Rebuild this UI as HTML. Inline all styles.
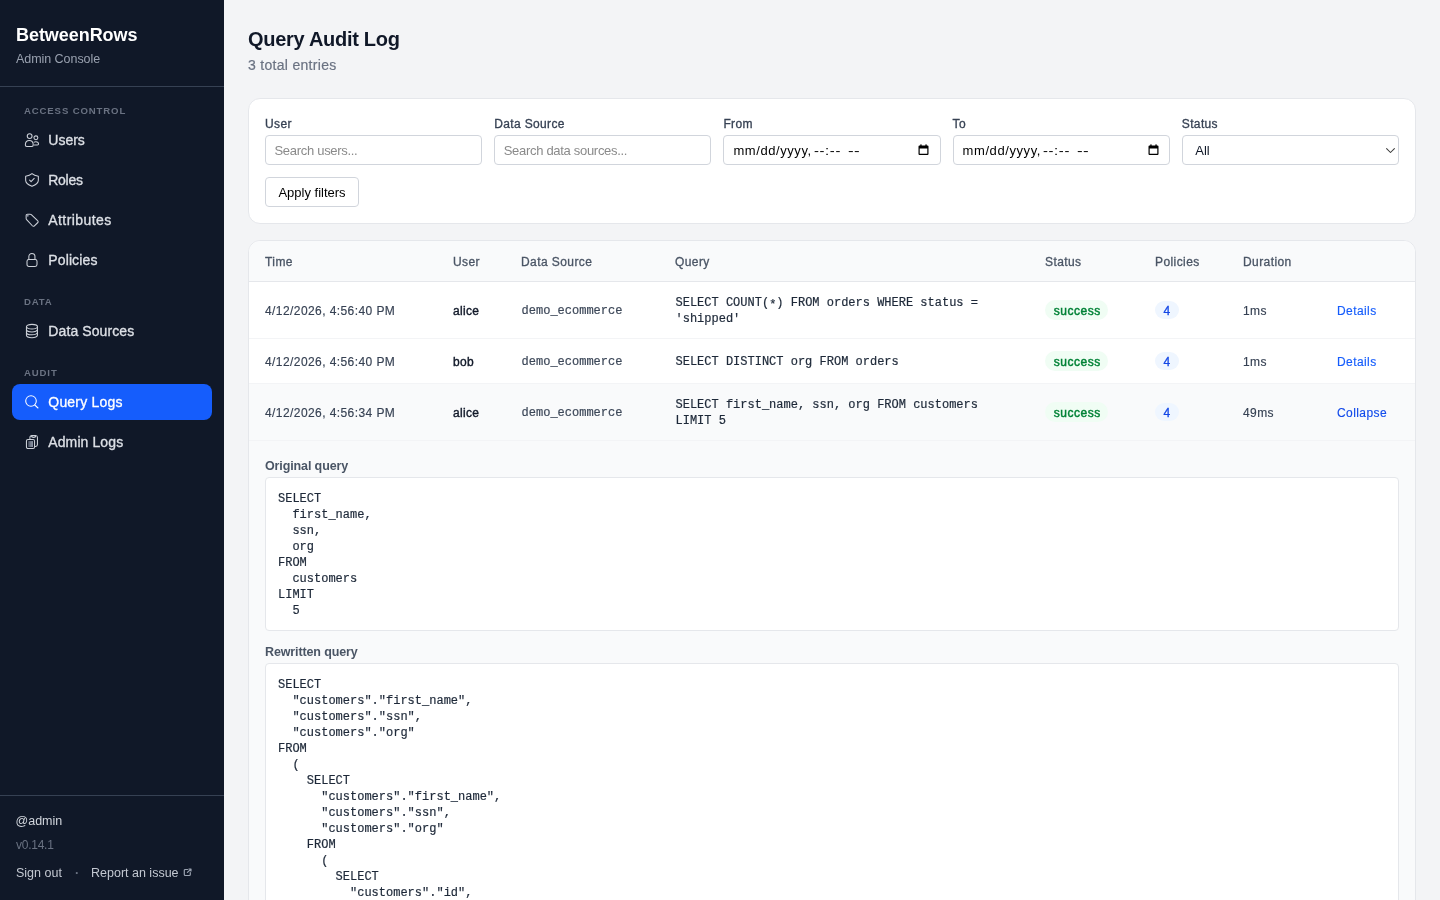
<!DOCTYPE html>
<html lang="en">
<head>
<meta charset="utf-8">
<title>BetweenRows Admin Console</title>
<style>
*{box-sizing:border-box;margin:0;padding:0}
html,body{width:1440px;height:900px;overflow:hidden}
body{font-family:"Liberation Sans",sans-serif;background:#f3f4f6;color:#101828;position:relative;will-change:transform}
.mono{font-family:"Liberation Mono",monospace}

/* ---------- sidebar ---------- */
#side{position:absolute;left:0;top:0;width:224px;height:900px;background:#101828;color:#fff}
#brand{position:absolute;left:16px;top:24px;font-size:18px;font-weight:700;line-height:22px;letter-spacing:-0.05px;color:#fff}
#sub{position:absolute;left:16px;top:51px;font-size:12.5px;line-height:16px;color:#99a1af;letter-spacing:-0.05px}
.hr{position:absolute;left:0;width:224px;height:1px;background:#364153}
.sec{position:absolute;left:24px;font-size:9.6px;font-weight:700;letter-spacing:0.86px;color:#6a7282;line-height:12px}
.nav{position:absolute;left:12px;width:200px;height:36px;border-radius:8px;color:#dde0e6;font-size:14px;line-height:36px;padding-left:36.3px;letter-spacing:0px;-webkit-text-stroke:0.3px currentColor}
.nav svg{position:absolute;left:12px;top:10px;width:16px;height:16px;fill:none;stroke:#cdd1d9;stroke-width:1.05;stroke-linecap:round;stroke-linejoin:round}
.nav.on{background:#155dfc;color:#fff}
.nav.on svg{stroke:#fff}
.foot{position:absolute;left:16px;font-size:12.5px;line-height:16px}

/* ---------- main ---------- */
h1{position:absolute;left:248px;top:26px;font-size:20px;line-height:26px;font-weight:700;color:#101828;letter-spacing:-0.29px}
#cnt{position:absolute;left:248px;top:55.5px;font-size:14px;line-height:18px;color:#6a7282;letter-spacing:0.3px;-webkit-text-stroke:0.2px #6a7282}
.card{position:absolute;left:248px;width:1168px;background:#fff;border:1px solid #e5e7eb;border-radius:12px}
#filters{top:98px;height:126px}
.lbl{position:absolute;top:18px;font-size:12px;line-height:14px;color:#364153;font-weight:400;letter-spacing:0.36px;-webkit-text-stroke:0.3px #364153}
.inp{position:absolute;top:36px;width:217.2px;height:30px;border:1px solid #d1d5dc;border-radius:4px;background:#fff;font-size:13px;line-height:30px;padding-left:8.5px;color:#8a8a8a;white-space:nowrap;letter-spacing:-0.3px}
.inp.dt{color:#000;letter-spacing:0.9px;padding-left:9px}
#apply{position:absolute;left:16px;top:78px;width:94px;height:30px;border:1px solid #d1d5dc;border-radius:4px;font-size:13px;line-height:30px;text-align:center;color:#000}

#tbl{top:240px;height:700px;overflow:hidden;border-bottom-left-radius:0;border-bottom-right-radius:0}
.row{position:absolute;left:0;width:1166px;border-bottom:1px solid #f3f4f6}
.c{position:absolute;font-size:12px;line-height:16px;color:#364153;white-space:nowrap;letter-spacing:0.42px;-webkit-text-stroke:0.15px #364153}
.th{font-size:12px;color:#4a5565;letter-spacing:0.42px;-webkit-text-stroke:0.3px #4a5565}
.q{font-family:"Liberation Mono",monospace;font-size:12px;line-height:16px;color:#1e2939;white-space:pre;letter-spacing:0;-webkit-text-stroke:0.2px #1e2939}
.ds{font-family:"Liberation Mono",monospace;font-size:12px;color:#3d4859;letter-spacing:0;-webkit-text-stroke:0.2px #3d4859}
.usr{color:#101828;letter-spacing:0.3px;-webkit-text-stroke:0.38px #101828}
.ok{position:absolute;left:796px;width:63px;height:20px;border-radius:10px;background:#f0fdf4;color:#008236;font-size:12px;font-weight:400;line-height:22px;text-align:center;letter-spacing:0.55px;-webkit-text-stroke:0.45px #008236;padding-left:1.5px}
.pol{position:absolute;left:906px;width:23.5px;height:18px;border-radius:9px;background:#eff6ff;color:#1447e6;font-size:12px;line-height:20px;text-align:center;-webkit-text-stroke:0.3px #1447e6}
.lnk{color:#155dfc;-webkit-text-stroke:0.15px #155dfc}
.sub{position:absolute;left:16px;font-size:12.5px;line-height:14px;font-weight:700;color:#4a5565;letter-spacing:-0.12px}
pre.box{position:absolute;left:16px;width:1134px;background:#fff;border:1px solid #e5e7eb;border-radius:4px;padding:13px 12px 11px;font-family:"Liberation Mono",monospace;font-size:12px;line-height:16px;color:#1e2939;-webkit-text-stroke:0.2px #1e2939}
</style>
</head>
<body>

<div id="side">
  <div id="brand">BetweenRows</div>
  <div id="sub">Admin Console</div>
  <div class="hr" style="top:86px"></div>

  <div class="sec" style="top:105px">ACCESS CONTROL</div>
  <div class="nav" style="top:122px"><svg viewBox="0 0 16 16"><circle cx="5.65" cy="4.1" r="2.4"/><circle cx="11.9" cy="5.8" r="1.95"/><path d="M1.35 13.1C1.35 10.4 3.1 8.55 5.3 8.55S9.25 10.4 9.25 13.1C9.25 14 8.7 14.45 7.9 14.45H2.7C1.9 14.45 1.35 14 1.35 13.1Z"/><path d="M10.4 13.05H13.5C14.2 13.05 14.55 12.7 14.55 12.1C14.55 10.7 13.4 9.65 11.9 9.65C11.2 9.65 10.6 9.85 10.15 10.2"/></svg>Users</div>
  <div class="nav" style="top:162px;letter-spacing:-0.3px"><svg viewBox="0 0 16 16"><path d="M8 1.6C6.6 2.9 4.2 3.9 1.65 4.2V8.3C1.65 11 4.4 13 8 14.35C11.6 13 14.35 11 14.35 8.3V4.2C11.8 3.9 9.4 2.9 8 1.6Z"/><path d="M5.6 8.1L7.1 9.6L10.2 6.4"/></svg>Roles</div>
  <div class="nav" style="top:202px;letter-spacing:0.42px"><svg viewBox="0 0 16 16"><path d="M2.15 3.6Q2.15 2.15 3.6 2.15L6.1 2.15Q6.8 2.15 7.3 2.65L13.6 8.7Q14.7 9.7 13.6 10.75L10.4 13.8Q9.4 14.8 8.35 13.75L2.65 7.7Q2.15 7.2 2.15 6.5Z"/><circle cx="3.75" cy="3.75" r="0.95" fill="#8990a0" stroke="none"/></svg>Attributes</div>
  <div class="nav" style="top:242px;letter-spacing:0.12px"><svg viewBox="0 0 16 16"><rect x="3" y="7.4" width="10" height="7.1" rx="1.9"/><path d="M4.85 7.4V4.6A3.05 3.05 0 0 1 10.95 4.6V7.4"/></svg>Policies</div>

  <div class="sec" style="top:296px">DATA</div>
  <div class="nav" style="top:313px;letter-spacing:0.1px"><svg viewBox="0 0 16 16"><ellipse cx="7.95" cy="3.7" rx="5.5" ry="2.35"/><path d="M2.45 3.7V12.3A5.5 2.35 0 0 0 13.45 12.3V3.7"/><path d="M2.45 6.6A5.5 2.35 0 0 0 13.45 6.6"/><path d="M2.45 9.45A5.5 2.35 0 0 0 13.45 9.45"/></svg>Data Sources</div>

  <div class="sec" style="top:367px">AUDIT</div>
  <div class="nav on" style="top:384px;letter-spacing:0.2px"><svg viewBox="0 0 16 16"><circle cx="7" cy="7" r="5.3"/><path d="M10.8 11L14 14"/></svg>Query Logs</div>
  <div class="nav" style="top:424px;letter-spacing:0.1px"><svg viewBox="0 0 16 16"><path d="M5.9 5V3.4A1.9 1.9 0 0 1 7.8 1.5H11.6A1.9 1.9 0 0 1 13.45 3.4V10.6A1.9 1.9 0 0 1 11.6 12.5H11.1"/><ellipse cx="9.6" cy="2.6" rx="2.1" ry="0.8"/><rect x="2.45" y="5.45" width="8.1" height="9.1" rx="1.5"/><defs><linearGradient id="cg" x1="0" x2="1" y1="0" y2="0"><stop offset="0" stop-color="#3f4758"/><stop offset="0.45" stop-color="#6f7787"/><stop offset="1" stop-color="#8d95a4"/></linearGradient></defs><rect x="4.1" y="7.1" width="4.9" height="5.9" fill="url(#cg)" stroke="none"/></svg>Admin Logs</div>

  <div class="hr" style="top:795px"></div>
  <div class="foot" style="top:813px;left:15.5px;color:#d1d5dc">@admin</div>
  <div class="foot" style="top:837px;color:#6a7282;font-size:12px;letter-spacing:-0.25px">v0.14.1</div>
  <div class="foot" style="top:865px;color:#c3c8d1">Sign out</div>
  <div class="foot" style="top:865px;left:75px;color:#6a7282;font-weight:700">·</div>
  <div class="foot" style="top:865px;left:91px;color:#c3c8d1">Report an issue</div>
  <svg style="position:absolute;left:183px;top:868px;width:9px;height:9px;fill:none;stroke:#99a1af;stroke-width:1.2;stroke-linecap:round;stroke-linejoin:round" viewBox="0 0 9 9"><path d="M4.6 1.5H2.3A1 1 0 0 0 1.3 2.5V6.5A1 1 0 0 0 2.3 7.5H6.3A1 1 0 0 0 7.3 6.5V4.6"/><path d="M4.4 4.4L7.9 1.2M5.9 1H8V3.1"/></svg>
</div>

<h1>Query Audit Log</h1>
<div id="cnt">3 total entries</div>

<div class="card" id="filters">
  <div class="lbl" style="left:16px">User</div>
  <div class="lbl" style="left:245.2px">Data Source</div>
  <div class="lbl" style="left:474.4px">From</div>
  <div class="lbl" style="left:703.6px">To</div>
  <div class="lbl" style="left:932.8px">Status</div>
  <div class="inp" style="left:16px">Search users...</div>
  <div class="inp" style="left:245.2px">Search data sources...</div>
  <div class="inp dt" style="left:474.4px"><span style="letter-spacing:0.58px">mm/dd/yyyy,</span><span style="display:inline-block;margin-left:2.4px;letter-spacing:0.55px;transform:scaleX(1.14);transform-origin:0 50%">--:--</span><span style="display:inline-block;margin-left:9.8px;letter-spacing:0.2px;transform:scaleX(1.3);transform-origin:0 50%">--</span><svg style="position:absolute;left:194px;top:8px;width:11px;height:12px" viewBox="0 0 11 12"><path d="M1.5 1.6H9.5A1 1 0 0 1 10.5 2.6V10A1 1 0 0 1 9.5 11H1.5A1 1 0 0 1 0.5 10V2.6A1 1 0 0 1 1.5 1.6ZM1.7 4.4V9.8H9.3V4.4Z" fill="#000" fill-rule="evenodd"/><rect x="2.3" y="0.4" width="1.3" height="2" fill="#000"/><rect x="7.4" y="0.4" width="1.3" height="2" fill="#000"/></svg></div>
  <div class="inp dt" style="left:703.6px"><span style="letter-spacing:0.58px">mm/dd/yyyy,</span><span style="display:inline-block;margin-left:2.4px;letter-spacing:0.55px;transform:scaleX(1.14);transform-origin:0 50%">--:--</span><span style="display:inline-block;margin-left:9.8px;letter-spacing:0.2px;transform:scaleX(1.3);transform-origin:0 50%">--</span><svg style="position:absolute;left:194px;top:8px;width:11px;height:12px" viewBox="0 0 11 12"><path d="M1.5 1.6H9.5A1 1 0 0 1 10.5 2.6V10A1 1 0 0 1 9.5 11H1.5A1 1 0 0 1 0.5 10V2.6A1 1 0 0 1 1.5 1.6ZM1.7 4.4V9.8H9.3V4.4Z" fill="#000" fill-rule="evenodd"/><rect x="2.3" y="0.4" width="1.3" height="2" fill="#000"/><rect x="7.4" y="0.4" width="1.3" height="2" fill="#000"/></svg></div>
  <div class="inp" style="left:932.8px;color:#101828;padding-left:12.5px;letter-spacing:0">All<svg style="position:absolute;left:202.5px;top:10.8px;width:11px;height:8px;fill:none;stroke:#3a3a3a;stroke-width:1.05;stroke-linecap:round;stroke-linejoin:round" viewBox="0 0 11 8"><path d="M1.6 1.6L5.5 5.5L9.4 1.6"/></svg></div>
  <div id="apply">Apply filters</div>
</div>

<div class="card" id="tbl">
  <!-- header -->
  <div class="row" style="top:0;height:41px;background:#f9fafb;border-top-left-radius:11px;border-top-right-radius:11px;border-bottom-color:#e5e7eb">
    <div class="c th" style="left:16px;top:13px">Time</div>
    <div class="c th" style="left:204px;top:13px">User</div>
    <div class="c th" style="left:272px;top:13px">Data Source</div>
    <div class="c th" style="left:426px;top:13px">Query</div>
    <div class="c th" style="left:796px;top:13px">Status</div>
    <div class="c th" style="left:906px;top:13px">Policies</div>
    <div class="c th" style="left:994px;top:13px">Duration</div>
  </div>
  <!-- row 1 -->
  <div class="row" style="top:41px;height:57px">
    <div class="c" style="left:16px;top:21px">4/12/2026, 4:56:40 PM</div>
    <div class="c usr" style="left:204px;top:21px">alice</div>
    <div class="c ds" style="left:272.6px;top:21px">demo_ecommerce</div>
    <div class="c q" style="left:426.5px;top:13px">SELECT COUNT(<span style="position:relative;top:2px">*</span>) FROM orders WHERE status =
'shipped'</div>
    <div class="ok" style="top:18px">success</div>
    <div class="pol" style="top:19px">4</div>
    <div class="c" style="left:994px;top:21px">1ms</div>
    <div class="c lnk" style="left:1088px;top:21px">Details</div>
  </div>
  <!-- row 2 -->
  <div class="row" style="top:98px;height:45px">
    <div class="c" style="left:16px;top:15px">4/12/2026, 4:56:40 PM</div>
    <div class="c usr" style="left:204px;top:15px">bob</div>
    <div class="c ds" style="left:272.6px;top:15px">demo_ecommerce</div>
    <div class="c q" style="left:426.5px;top:15px">SELECT DISTINCT org FROM orders</div>
    <div class="ok" style="top:12px">success</div>
    <div class="pol" style="top:13px">4</div>
    <div class="c" style="left:994px;top:15px">1ms</div>
    <div class="c lnk" style="left:1088px;top:15px">Details</div>
  </div>
  <!-- row 3 -->
  <div class="row" style="top:143px;height:57px;background:#f9fafb">
    <div class="c" style="left:16px;top:21px">4/12/2026, 4:56:34 PM</div>
    <div class="c usr" style="left:204px;top:21px">alice</div>
    <div class="c ds" style="left:272.6px;top:21px">demo_ecommerce</div>
    <div class="c q" style="left:426.5px;top:13px">SELECT first_name, ssn, org FROM customers
LIMIT 5</div>
    <div class="ok" style="top:18px">success</div>
    <div class="pol" style="top:19px">4</div>
    <div class="c" style="left:994px;top:21px">49ms</div>
    <div class="c lnk" style="left:1088px;top:21px;color:#1447e6">Collapse</div>
  </div>
  <!-- expanded -->
  <div class="row" style="top:200px;height:500px;background:#f9fafb;border:0">
    <div class="sub" style="top:18px">Original query</div>
<pre class="box" style="top:36px;height:154px">SELECT
  first_name,
  ssn,
  org
FROM
  customers
LIMIT
  5</pre>
    <div class="sub" style="top:204px">Rewritten query</div>
<pre class="box" style="top:222px;height:300px">SELECT
  "customers"."first_name",
  "customers"."ssn",
  "customers"."org"
FROM
  (
    SELECT
      "customers"."first_name",
      "customers"."ssn",
      "customers"."org"
    FROM
      (
        SELECT
          "customers"."id",
          "customers"."first_name",
          "customers"."last_name",</pre>
  </div>
</div>

</body>
</html>
